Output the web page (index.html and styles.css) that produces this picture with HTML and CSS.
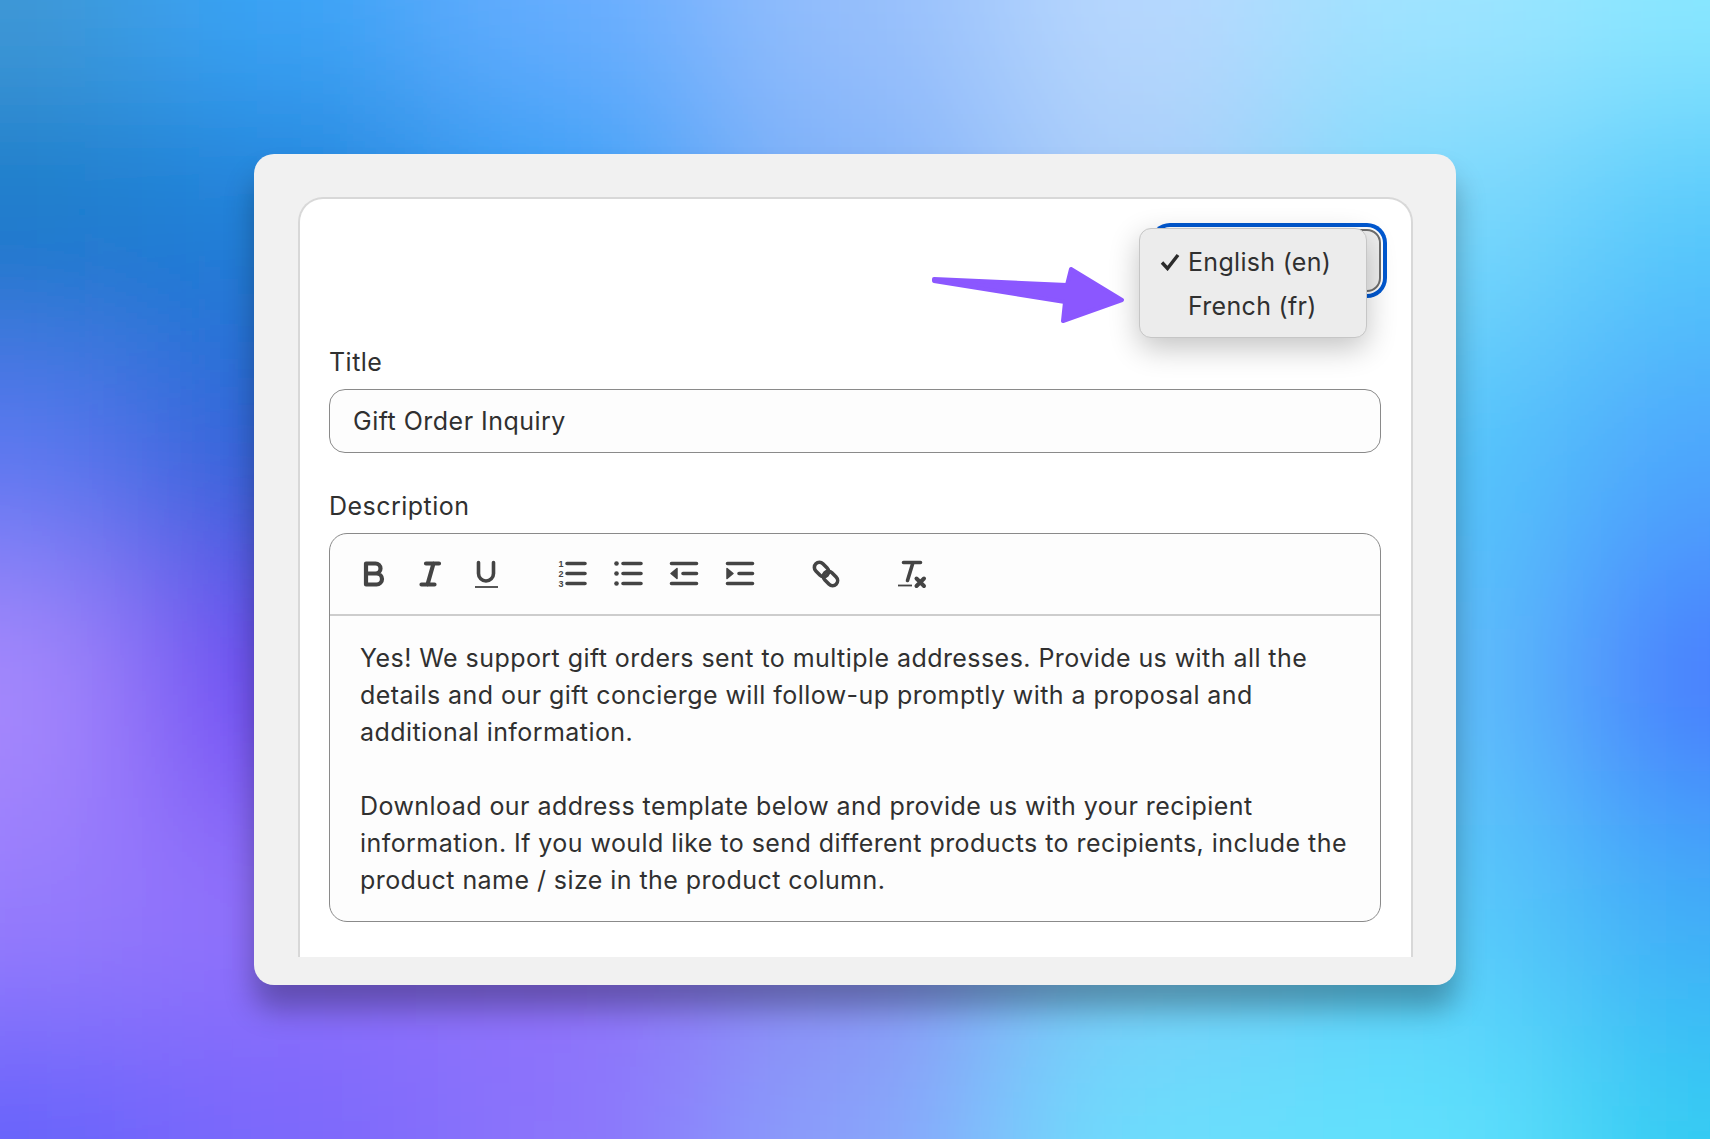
FILE: index.html
```html
<!DOCTYPE html>
<html lang="en">
<head>
<meta charset="utf-8">
<title>Gift Order Inquiry</title>
<link rel="stylesheet" href="styles.css">
</head>
<body>
<svg class="backdrop" viewBox="0 0 1710 1139" aria-hidden="true">
  <defs><filter id="soft" filterUnits="userSpaceOnUse" x="-500" y="-500" width="2710" height="2139"><feGaussianBlur stdDeviation="85"/></filter></defs>
  <g filter="url(#soft)">
    <rect x="-400" y="-400" width="542" height="514" fill="#3f99d6"/><rect x="142" y="-400" width="285" height="514" fill="#3aa5f8"/><rect x="427" y="-400" width="285" height="514" fill="#68aeff"/><rect x="712" y="-400" width="285" height="514" fill="#96bffc"/><rect x="997" y="-400" width="285" height="514" fill="#b8d8fe"/><rect x="1282" y="-400" width="285" height="514" fill="#a0e4ff"/><rect x="1567" y="-400" width="543" height="514" fill="#8ae8ff"/>
    <rect x="-400" y="114" width="542" height="228" fill="#1178c8"/><rect x="142" y="114" width="285" height="228" fill="#1b7ed6"/><rect x="427" y="114" width="285" height="228" fill="#2c9ef5"/><rect x="712" y="114" width="285" height="228" fill="#80b0f8"/><rect x="997" y="114" width="285" height="228" fill="#a8ccf8"/><rect x="1282" y="114" width="285" height="228" fill="#78d8fc"/><rect x="1567" y="114" width="543" height="228" fill="#52c8fb"/>
    <rect x="-400" y="342" width="542" height="228" fill="#5a78f2"/><rect x="142" y="342" width="285" height="228" fill="#2a62d6"/><rect x="427" y="342" width="285" height="228" fill="#4070e8"/><rect x="712" y="342" width="285" height="228" fill="#6090f0"/><rect x="997" y="342" width="285" height="228" fill="#80b0f8"/><rect x="1282" y="342" width="285" height="228" fill="#52c6fb"/><rect x="1567" y="342" width="543" height="228" fill="#4ea4fc"/>
    <rect x="-400" y="570" width="542" height="228" fill="#a88afd"/><rect x="142" y="570" width="285" height="228" fill="#6a46f2"/><rect x="427" y="570" width="285" height="228" fill="#7a60f0"/><rect x="712" y="570" width="285" height="228" fill="#7a88f0"/><rect x="997" y="570" width="285" height="228" fill="#80b8f8"/><rect x="1282" y="570" width="285" height="228" fill="#60c0fa"/><rect x="1567" y="570" width="543" height="228" fill="#4a78fe"/>
    <rect x="-400" y="798" width="542" height="228" fill="#967dfd"/><rect x="142" y="798" width="285" height="228" fill="#9070fa"/><rect x="427" y="798" width="285" height="228" fill="#9070f8"/><rect x="712" y="798" width="285" height="228" fill="#8a8af2"/><rect x="997" y="798" width="285" height="228" fill="#7ac8f5"/><rect x="1282" y="798" width="285" height="228" fill="#5acbfa"/><rect x="1567" y="798" width="543" height="228" fill="#40abf8"/>
    <rect x="-400" y="1026" width="542" height="513" fill="#6462fa"/><rect x="142" y="1026" width="285" height="513" fill="#7a68fb"/><rect x="427" y="1026" width="285" height="513" fill="#8b74fc"/><rect x="712" y="1026" width="285" height="513" fill="#8aa2fb"/><rect x="997" y="1026" width="285" height="513" fill="#6cdefd"/><rect x="1282" y="1026" width="285" height="513" fill="#60e2fd"/><rect x="1567" y="1026" width="543" height="513" fill="#32ccf2"/>
  </g>
</svg>
<main class="panel">
  <section class="card">
    <div class="lang-row">
      <div class="select"></div>
    </div>
    <label class="label">Title</label>
    <div class="input">Gift Order Inquiry</div>
    <label class="label label-desc">Description</label>
    <div class="editor">
      <div class="toolbar">
        <svg class="icon icon-heavy" viewBox="0 0 28 28"><path d="M6 3.500h9.500a5 5 0 0 1 0 10H6zM6 13.500h10.500a5.500 5.500 0 0 1 0 11H6z"/></svg>
        <svg class="icon icon-heavy" viewBox="0 0 28 28"><path d="M10 3.500h13M5.500 24.500h13M17.500 3.500l-6 21"/></svg>
        <svg class="icon" viewBox="0 0 28 28"><path d="M6.500 2.500v11a7.500 7.500 0 0 0 15 0v-11"/><path class="thin" d="M3 27h23"/></svg>
        <svg class="icon group" viewBox="0 0 28 28"><path d="M9 3.500h18M9 13.500h18M9 23.500h18"/><text class="num" x="0.500" y="6.500">1</text><text class="num" x="0.500" y="16.500">2</text><text class="num" x="0.500" y="27">3</text></svg>
        <svg class="icon" viewBox="0 0 28 28"><path d="M9 3.500h18M9 13.500h18M9 23.500h18"/><circle class="dot" cx="2.500" cy="3.500" r="2.300"/><circle class="dot" cx="2.500" cy="13.500" r="2.300"/><circle class="dot" cx="2.500" cy="23.500" r="2.300"/></svg>
        <svg class="icon" viewBox="0 0 28 28"><path d="M1.500 3.500h25M13 13.500h13.500M1.500 23.500h25"/><path class="solid" d="M1 13.500 7 8.500v10z"/></svg>
        <svg class="icon" viewBox="0 0 28 28"><path d="M1.500 3.500h25M13 13.500h13.500M1.500 23.500h25"/><path class="solid" d="M1 8.500 7 13.500 1 18.500z"/></svg>
        <svg class="icon group" viewBox="0 0 28 28"><rect x="1.500" y="4.500" width="16" height="10" rx="5" transform="rotate(45 9.500 9.500)"/><rect x="10.500" y="13.500" width="16" height="10" rx="5" transform="rotate(45 18.500 18.500)"/></svg>
        <svg class="icon group" viewBox="0 0 28 28"><path d="M5.500 2.500h17M15 2.500l-5.500 18"/><path class="thin" d="M0 25.500h14"/><path class="cross" d="M18.500 18.500l7.500 7.500M26 18.500l-7.500 7.500"/></svg>
      </div>
      <div class="body-text">
        <p class="para">Yes! We support gift orders sent to multiple addresses. Provide us with all the<br>details and our gift concierge will follow-up promptly with a proposal and<br>additional information.</p>
        <p class="para">Download our address template below and provide us with your recipient<br>information. If you would like to send different products to recipients, include the<br>product name / size in the product column.</p>
      </div>
    </div>
  </section>
  <div class="menu">
    <div class="menu-item"><svg class="check" viewBox="0 0 20 18"><path d="M2 9.500 7.500 15.500 18 2"/></svg>English (en)</div>
    <div class="menu-item">French (fr)</div>
  </div>
  <svg class="arrow" viewBox="0 0 200 64"><path d="M3 15 136 21 140 5 191 36 132 57 134 38 3 17Z"/></svg>
</main>
</body>
</html>
```
FILE: styles.css
```css
* { box-sizing: border-box; }
html, body { margin: 0; height: 100%; }
body {
  position: relative;
  width: 1710px;
  height: 1139px;
  overflow: hidden;
  padding: 154px 0 0 254px;
  font-family: Inter, "Liberation Sans", sans-serif;
  color: #303030;
  background-color: #6f90f5;
}
.backdrop { position: absolute; left: 0; top: 0; width: 1710px; height: 1139px; }
.panel {
  position: relative;
  width: 1202px;
  height: 831px;
  padding: 43px 43px 28px 44px;
  background: #f1f1f1;
  border-radius: 20px;
  box-shadow: 0 24px 30px rgba(0, 0, 0, 0.3);
}
.card {
  height: 760px;
  padding: 30px 30px 0 29px;
  background: #fff;
  border: 2px solid #d8d8d8;
  border-bottom: 0;
  border-radius: 25px 25px 0 0;
}
.lang-row { display: flex; justify-content: flex-end; height: 63px; margin-bottom: 55px; }
.select {
  width: 225px;
  height: 63px;
  background: #efefef;
  border: 2px solid #6e6e6e;
  border-radius: 14px;
  box-shadow: 0 0 0 2px #fff, 0 0 0 6px #0058d0;
}
.label { display: block; height: 30px; margin-bottom: 12px; font-size: 25px; line-height: 30px; letter-spacing: 0.48px; }
.label-desc { margin-top: 38px; }
.input {
  height: 64px;
  padding-left: 23px;
  background: #fdfdfd;
  border: 1.5px solid #8a8a8a;
  border-radius: 16px;
  font-size: 25px;
  line-height: 63px;
  letter-spacing: 0.48px;
}
.editor {
  height: 389px;
  background: #fdfdfd;
  border: 1.5px solid #8a8a8a;
  border-radius: 18px;
}
.toolbar {
  display: flex;
  align-items: center;
  gap: 28px;
  height: 82px;
  padding-left: 30px;
  border-bottom: 2px solid #cdcdcd;
}
.icon { flex: none; width: 28px; height: 28px; overflow: visible; fill: none; stroke: #444; stroke-width: 3.6px; stroke-linecap: round; stroke-linejoin: round; }
.icon-heavy { stroke-width: 4.2px; }
.group { margin-left: 30px; }
.thin { stroke-width: 1.8px; stroke-linecap: butt; }
.cross { stroke-width: 4px; }
.solid { fill: #444; stroke: #444; stroke-width: 1.500px; }
.dot { fill: #444; stroke: none; }
.num { fill: #444; stroke: none; font: 700 9px "Liberation Sans", sans-serif; }
.body-text { padding: 24px 20px 0 30px; font-size: 25px; line-height: 37px; letter-spacing: 0.44px; white-space: nowrap; }
.para { margin: 0 0 37px; }
.menu {
  position: absolute;
  left: 885px;
  top: 74px;
  width: 228px;
  height: 110px;
  padding-top: 11px;
  background: #ececec;
  border: 1px solid #c6c6c6;
  border-radius: 12px;
  box-shadow: 0 10px 30px rgba(0, 0, 0, 0.24);
}
.menu-item { position: relative; height: 44px; padding-left: 48px; font-size: 25px; line-height: 44px; letter-spacing: 0.3px; white-space: nowrap; }
.check { position: absolute; left: 20px; top: 13px; width: 20px; height: 18px; fill: none; stroke: #2b2b2b; stroke-width: 3.4px; }
.arrow { position: absolute; left: 677px; top: 110px; width: 200px; height: 64px; overflow: visible; fill: #8b57ff; stroke: #8b57ff; stroke-width: 4px; stroke-linejoin: round; }
```
